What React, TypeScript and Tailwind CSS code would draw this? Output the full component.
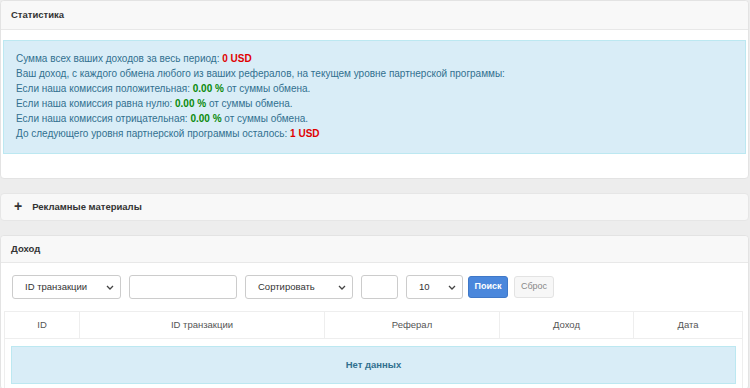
import React from "react";

function Chevron() {
  return (
    <svg width="8" height="5" viewBox="0 0 8 5" className="shrink-0">
      <path d="M1 1l3 3 3-3" fill="none" stroke="#444" strokeWidth="1.3" />
    </svg>
  );
}

function Select({ label, className }: { label: string; className: string }) {
  return (
    <div
      className={`h-[24px] border border-[#ccc] rounded-[3px] bg-white flex items-center justify-between pl-[12px] pr-[6px] text-[9.5px] text-[#333] ${className}`}
    >
      <span>{label}</span>
      <Chevron />
    </div>
  );
}

export default function App() {
  return (
    <div
      className="w-[750px] h-[388px] overflow-hidden bg-[#ededed] text-[9.5px] text-[#333]"
      style={{ fontFamily: '"Liberation Sans", Arial, sans-serif' }}
    >
      {/* Статистика */}
      <div className="w-[749px] bg-white border border-[#e3e3e3] rounded-[4px]">
        <div className="h-[29px] bg-[#f8f8f8] border-b border-[#e8e8e8] rounded-t-[4px] flex items-center px-[10px] font-bold">
          Статистика
        </div>
        <div className="pt-[10px] pb-[24px] px-[2px]">
          <div className="bg-[#d9edf7] border border-[#bce8f1] text-[#31708f] text-[10px] pl-[12px] pt-[10px] pb-[12px] leading-[15px]">
            <div>
              Сумма всех ваших доходов за весь период:{" "}
              <b className="text-[#e00000]">0 USD</b>
            </div>
            <div>
              Ваш доход, с каждого обмена любого из ваших рефералов, на текущем уровне партнерской программы:
            </div>
            <div>
              Если наша комиссия положительная:{" "}
              <b className="text-[#0a8a0a]">0.00 %</b> от суммы обмена.
            </div>
            <div>
              Если наша комиссия равна нулю:{" "}
              <b className="text-[#0a8a0a]">0.00 %</b> от суммы обмена.
            </div>
            <div>
              Если наша комиссия отрицательная:{" "}
              <b className="text-[#0a8a0a]">0.00 %</b> от суммы обмена.
            </div>
            <div>
              До следующего уровня партнерской программы осталось:{" "}
              <b className="text-[#e00000]">1 USD</b>
            </div>
          </div>
        </div>
      </div>

      {/* Рекламные материалы */}
      <div className="mt-[14px] w-[749px] h-[28px] bg-[#f8f8f8] border border-[#e6e6e6] rounded-[4px] flex items-center pl-[13px] font-bold">
        <span className="text-[14px] leading-none mr-[10px] mt-[-2px]">+</span>
        Рекламные материалы
      </div>

      {/* Доход */}
      <div className="mt-[14px] w-[749px] bg-white border border-[#e3e3e3] rounded-[4px]">
        <div className="h-[27px] bg-[#f8f8f8] border-b border-[#e8e8e8] rounded-t-[4px] flex items-center px-[10px] font-bold">
          Доход
        </div>
        <div className="pt-[12px] px-[3px]">
          <div className="flex items-center gap-[8px] pl-[8px]">
            <Select label="ID транзакции" className="w-[109px]" />
            <div className="w-[108px] h-[24px] border border-[#ccc] rounded-[3px] bg-white" />
            <Select label="Сортировать" className="w-[108px]" />
            <div className="w-[37px] h-[24px] border border-[#ccc] rounded-[3px] bg-white" />
            <Select label="10" className="w-[57px]" />
            <div className="ml-[-3px] w-[40px] h-[22px] rounded-[3px] bg-[#4a87dc] border border-[#3f78c8] text-white text-[9px] font-bold flex items-center justify-center">
              Поиск
            </div>
            <div className="ml-[-2px] w-[40px] h-[22px] rounded-[3px] bg-[#f7f7f7] border border-[#e3e3e3] text-[#888] text-[9px] flex items-center justify-center">
              Сброс
            </div>
          </div>
          <div className="mt-[12px] mr-[2px] border border-[#eee]">
            <div className="flex h-[27px] border-b border-[#eee] text-[#555] items-center">
              <div className="w-[75px] h-full flex items-center justify-center border-r border-[#eee]">ID</div>
              <div className="w-[245px] h-full flex items-center justify-center border-r border-[#eee]">ID транзакции</div>
              <div className="w-[175px] h-full flex items-center justify-center border-r border-[#eee]">Реферал</div>
              <div className="w-[134px] h-full flex items-center justify-center border-r border-[#eee]">Доход</div>
              <div className="flex-1 h-full flex items-center justify-center">Дата</div>
            </div>
            <div className="px-[6px] pt-[7px] pb-[4px]">
              <div className="h-[38px] bg-[#d9edf7] border border-[#bce8f1] text-[#31708f] font-bold flex items-center justify-center">
                Нет данных
              </div>
            </div>
          </div>
        </div>
      </div>
    </div>
  );
}
